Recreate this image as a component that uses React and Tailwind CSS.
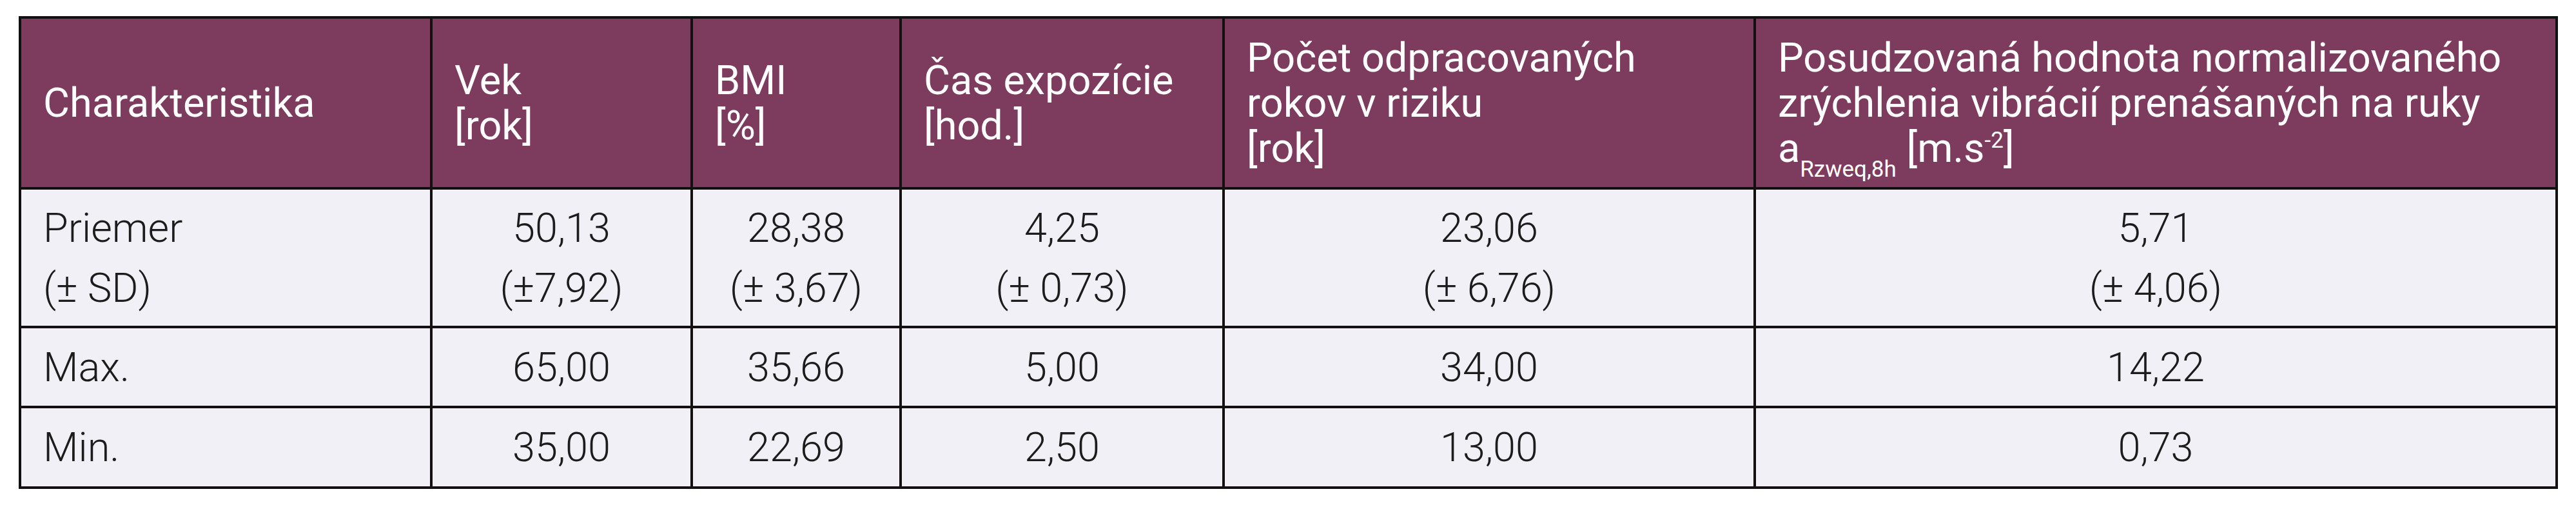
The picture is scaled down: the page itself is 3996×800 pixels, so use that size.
import React from 'react'

const cols = 'grid-cols-[638px_404px_324px_501px_824px_1244px]'

const HeadCell = ({ children }) => (
  <div className="h-[265px] bg-[#7d3b5e] text-white border-r-4 border-b-4 border-[#141012] flex items-center pl-[34px] pr-2 text-[63px] leading-[70px] whitespace-nowrap">
    <div>{children}</div>
  </div>
)

const Cell = ({ h, left, children }) => (
  <div
    className={`${h} bg-[#f0f0f6] text-[#1c1c1c] font-light border-r-4 border-b-4 border-[#141012] flex items-center text-[63px] leading-[93px] whitespace-nowrap ${
      left ? 'pl-[34px]' : 'justify-center text-center'
    }`}
  >
    <div>{children}</div>
  </div>
)

const rows = [
  {
    h: 'h-[215px]',
    label: ['Priemer', '(± SD)'],
    values: [
      ['50,13', '(±7,92)'],
      ['28,38', '(± 3,67)'],
      ['4,25', '(± 0,73)'],
      ['23,06', '(± 6,76)'],
      ['5,71', '(± 4,06)']
    ]
  },
  {
    h: 'h-[124px]',
    label: ['Max.'],
    values: [['65,00'], ['35,66'], ['5,00'], ['34,00'], ['14,22']]
  },
  {
    h: 'h-[125px]',
    label: ['Min.'],
    values: [['35,00'], ['22,69'], ['2,50'], ['13,00'], ['0,73']]
  }
]

const Lines = ({ lines }) =>
  lines.map((l, i) => (
    <React.Fragment key={i}>
      {i > 0 && <br />}
      {l}
    </React.Fragment>
  ))

export default function App() {
  return (
    <div className="w-[3996px] h-[800px] bg-white pl-[29px] pt-[25px] font-['Roboto','Liberation_Sans',Arial,sans-serif]">
      <div className={`grid ${cols} w-fit border-l-4 border-t-4 border-[#141012]`}>
        <HeadCell>Charakteristika</HeadCell>
        <HeadCell>
          Vek
          <br />
          [rok]
        </HeadCell>
        <HeadCell>
          BMI
          <br />
          [%]
        </HeadCell>
        <HeadCell>
          Čas expozície
          <br />
          [hod.]
        </HeadCell>
        <HeadCell>
          Počet odpracovaných
          <br />
          rokov v riziku
          <br />
          [rok]
        </HeadCell>
        <HeadCell>
          Posudzovaná hodnota normalizovaného
          <br />
          zrýchlenia vibrácií prenášaných na ruky
          <br />
          a<sub className="text-[35px] -bottom-[23px]">Rzweq,8h</sub> [m.s<sup className="text-[35px] -top-[22px]">-2</sup>]
        </HeadCell>

        {rows.map((r) => (
          <React.Fragment key={r.label[0]}>
            <Cell h={r.h} left>
              <Lines lines={r.label} />
            </Cell>
            {r.values.map((v, i) => (
              <Cell key={i} h={r.h}>
                <Lines lines={v} />
              </Cell>
            ))}
          </React.Fragment>
        ))}
      </div>
    </div>
  )
}
